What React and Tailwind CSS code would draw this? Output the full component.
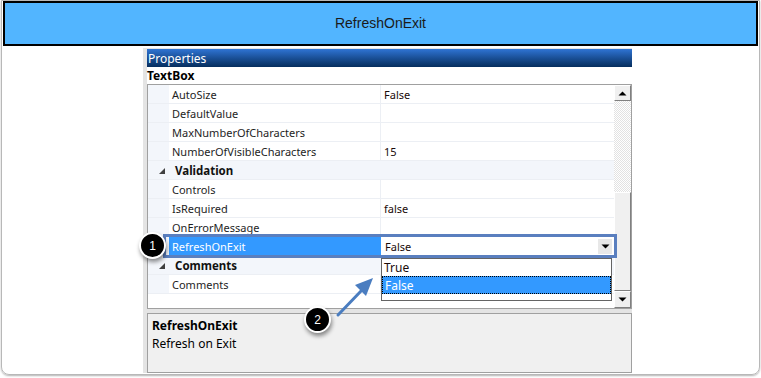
import React from 'react';

const rows = [
  { type: 'prop', name: 'AutoSize', value: 'False' },
  { type: 'prop', name: 'DefaultValue', value: '' },
  { type: 'prop', name: 'MaxNumberOfCharacters', value: '' },
  { type: 'prop', name: 'NumberOfVisibleCharacters', value: '15' },
  { type: 'cat', name: 'Validation' },
  { type: 'prop', name: 'Controls', value: '' },
  { type: 'prop', name: 'IsRequired', value: 'false' },
  { type: 'prop', name: 'OnErrorMessage', value: '' },
  { type: 'selected', name: 'RefreshOnExit', value: 'False' },
  { type: 'cat', name: 'Comments' },
  { type: 'prop', name: 'Comments', value: '' },
];

function Caret({ up }) {
  return (
    <svg width="9" height="5" viewBox="0 0 9 5">
      {up ? <path d="M0.5 4.5 L4.5 0.5 L8.5 4.5 Z" fill="#000" /> : <path d="M0.5 0.5 L4.5 4.5 L8.5 0.5 Z" fill="#000" />}
    </svg>
  );
}

function Row({ row }) {
  if (row.type === 'cat') {
    return (
      <div className="flex h-[19px] bg-[#f3f6fb] border-b border-[#eceff4]">
        <div className="w-[21px] flex items-center justify-end pr-[4px] pt-[1px]">
          <svg width="6" height="6" viewBox="0 0 6 6">
            <path d="M6 0 L6 6 L0 6 Z" fill="#404040" />
          </svg>
        </div>
        <div className="pl-[6px] pt-[2px] flex items-center font-bold text-[11.5px] text-[#111]">{row.name}</div>
      </div>
    );
  }
  if (row.type === 'selected') {
    return (
      <div className="flex h-[19px] border-b border-[#eceff4]">
        <div className="w-[21px] bg-[#f3f6fb]" />
        <div className="w-[212px] bg-[#3399ff] text-white pl-[3px] pt-[2px] flex items-center">{row.name}</div>
        <div className="flex-1 bg-white pl-[4px] flex items-center justify-between pr-[2px]">
          <span className="text-[#1a0a0a] pt-[2px]">{row.value}</span>
          <div className="w-[14px] h-[15px] bg-[#e8e8e8] flex items-center justify-center">
            <Caret />
          </div>
        </div>
      </div>
    );
  }
  return (
    <div className="flex h-[19px] border-b border-[#eceff4]">
      <div className="w-[21px] bg-[#f3f6fb]" />
      <div className="w-[212px] pl-[3px] pt-[2px] flex items-center text-[#1e1e1e] border-r border-[#eceff4]">{row.name}</div>
      <div className="flex-1 pl-[3px] pt-[2px] flex items-center text-[#1a0a0a]">{row.value}</div>
    </div>
  );
}

function Badge({ n, className }) {
  return (
    <div className={`absolute w-[27px] h-[27px] rounded-full bg-black border-2 border-white shadow-[1px_3px_4px_rgba(0,0,0,0.45)] flex items-center justify-center text-white text-[12px] font-['Liberation_Sans',sans-serif] ${className}`}>
      {n}
    </div>
  );
}

export default function App() {
  return (
    <div className="relative w-[761px] h-[378px] bg-white overflow-hidden font-['Noto_Sans',sans-serif] text-[11px]">
      <div className="ml-[1px] w-[759px] h-[375px] border border-[#b8b8b8] rounded-b-[8px] shadow-[0_1px_2px_rgba(0,0,0,0.3)] flex flex-col">
        <div className="mx-px h-[45px] border-2 border-black bg-[#52b5ff] flex items-center justify-center text-[14px] text-[#1a1a1a] font-['Liberation_Sans',sans-serif]">
          RefreshOnExit
        </div>

        <div className="ml-[141px] mt-[2px] w-[489px] flex-1 mb-[1px] bg-[#e4e4e4] pl-[4px] pt-[1px] flex flex-col">
          <div className="h-[18px] bg-gradient-to-b from-[#2f74d4] to-[#062e5e] text-white text-[12px] pl-[1px] pt-[2px] flex items-center">
            Properties
          </div>
          <div className="h-[17px] bg-white font-bold text-[12px] text-black pt-[1px] flex items-center">TextBox</div>

          <div className="h-[225px] border border-[#a0a0a0] bg-white flex">
            <div className="flex-1 flex flex-col">
              {rows.map((r, i) => (
                <Row key={i} row={r} />
              ))}
            </div>
            <div className="w-[17px] flex flex-col">
              <div className="h-[16px] bg-[#f0f0f0] border border-t-white border-l-white border-r-[#808080] border-b-[#808080] flex items-center justify-center">
                <Caret up />
              </div>
              <div className="h-[91px] bg-[repeating-conic-gradient(#e2e2e2_0_25%,#ffffff_0_50%)] bg-[length:2px_2px]" />
              <div className="flex-1 bg-[#f0f0f0] border border-t-white border-l-white border-r-[#808080] border-b-[#808080]" />
              <div className="h-[17px] bg-[#f0f0f0] border border-t-white border-l-white border-r-[#808080] border-b-[#808080] flex items-center justify-center">
                <Caret />
              </div>
            </div>
          </div>

          <div className="mt-[4px] h-[60px] border border-[#a0a0a0] bg-[#f0f0f0] pl-[4px] pt-[3px] text-[12px] text-black leading-[18px]">
            <div className="font-bold">RefreshOnExit</div>
            <div>Refresh on Exit</div>
          </div>
        </div>
      </div>

      {/* dropdown list */}
      <div className="absolute left-[381px] top-[258px] w-[231px] h-[43px] border border-[#646464] bg-white text-[12px]">
        <div className="h-[17px] pl-[2px] pt-[1px] flex items-center text-[#1a0a0a]">True</div>
        <div className="h-[18px] pl-[2px] pt-[1px] flex items-center bg-[#3399ff] text-white border border-dotted border-black">False</div>
      </div>

      {/* highlight outline */}
      <div className="absolute left-[163px] top-[234px] w-[454px] h-[24px] border-[3px] border-[#5a7fbf]" />

      {/* arrow */}
      <svg className="absolute left-0 top-0" width="761" height="378" viewBox="0 0 761 378">
        <line x1="338" y1="315" x2="362" y2="290" stroke="#4a7dc0" strokeWidth="3" strokeLinecap="round" />
        <path d="M373 278 L355 285 L366 296 Z" fill="#4a7dc0" />
      </svg>

      <Badge n="1" className="left-[139px] top-[232px]" />
      <Badge n="2" className="left-[304px] top-[306px]" />
    </div>
  );
}
